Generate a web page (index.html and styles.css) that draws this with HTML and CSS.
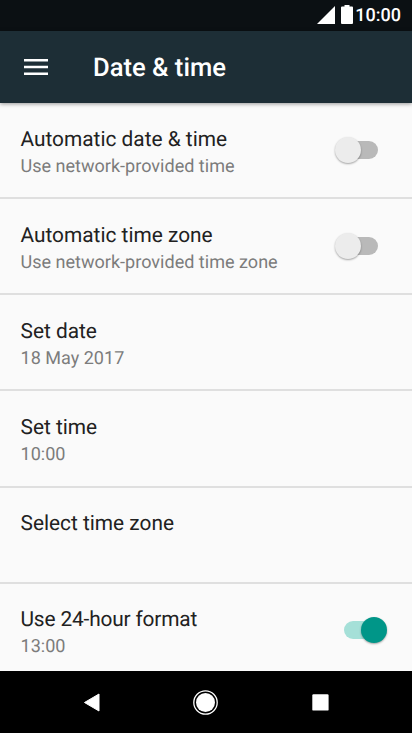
FILE: index.html
```html
<!DOCTYPE html>
<html lang="en">
<head>
<meta charset="utf-8">
<title>Date &amp; time</title>
<link rel="stylesheet" href="styles.css">
</head>
<body>
<div class="screen">
  <div class="status">
    <svg class="signal" width="18" height="18" viewBox="0 0 18 18"><path d="M18 0V18H0Z" fill="#fff"/></svg>
    <svg class="battery" width="12" height="19" viewBox="0 0 12 19"><path d="M3.500 0h5v1.500H11q1 0 1 1V18q0 1-1 1H1q-1 0-1-1V2.500q0-1 1-1h2.500z" fill="#fff"/></svg>
    <span class="clock">10:00</span>
  </div>
  <header class="bar">
    <svg class="menu" width="24" height="16" viewBox="0 0 24 16"><path d="M0 1.300h24M0 8h24M0 14.700h24" stroke="#fff" stroke-width="2.500"/></svg>
    <h1 class="title">Date &amp; time</h1>
  </header>
  <main class="list">
    <div class="row"><div class="text"><div class="name">Automatic date &amp; time</div><div class="sub">Use network-provided time</div></div><div class="switch"><span class="knob"></span></div></div>
    <div class="row"><div class="text"><div class="name">Automatic time zone</div><div class="sub">Use network-provided time zone</div></div><div class="switch"><span class="knob"></span></div></div>
    <div class="row"><div class="text"><div class="name">Set date</div><div class="sub">18 May 2017</div></div></div>
    <div class="row"><div class="text"><div class="name">Set time</div><div class="sub">10:00</div></div></div>
    <div class="row"><div class="text"><div class="name">Select time zone</div></div></div>
    <div class="row last"><div class="text"><div class="name tight">Use 24-hour format</div><div class="sub">13:00</div></div><div class="switch on"><span class="knob"></span></div></div>
  </main>
  <nav class="nav">
    <svg width="412" height="62" viewBox="0 0 412 62" fill="#fff"><path d="M84.500 31.500L99 23v17z" stroke="#fff" stroke-linejoin="round"/><circle cx="205.500" cy="31.500" r="9.500"/><circle cx="205.500" cy="31.500" r="11.700" fill="none" stroke="#fff" stroke-width="1.300"/><rect x="312.300" y="23.300" width="16.300" height="16.300" rx="1.200"/></svg>
  </nav>
</div>
</body>
</html>
```
FILE: styles.css
```css
* { box-sizing: border-box; }
body { margin: 0; font-family: Roboto, sans-serif; background: #fafafa; text-rendering: geometricPrecision; }
.screen { width: 412px; height: 733px; overflow: hidden; display: flex; flex-direction: column; }
.status { height: 31px; flex: none; background: #0b1013; color: #fff; display: flex; align-items: flex-start; justify-content: flex-end; padding: 6px 11px 0 0; }
.signal { margin-right: 6px; }
.battery { margin-top: -1px; }
.clock { font-size: 18px; line-height: 20px; font-weight: 500; margin-left: 2px; }
.bar { height: 72px; flex: none; background: #1d2e36; color: #fff; display: flex; align-items: center; padding-left: 24px; box-shadow: 0 1px 4px rgba(0,0,0,.4); position: relative; }
.title { margin: 2px 0 0 45px; font-size: 25.6px; line-height: 30px; font-weight: 500; }
.list { flex: 1; min-height: 0; overflow: hidden; }
.row { height: 96.15px; display: flex; justify-content: space-between; border-bottom: 2px solid #dfdfdf; padding: 22.8px 34px 0 20.5px; }
.last { padding-top: 22px; }
.name { font-size: 20.85px; line-height: 28px; color: #212121; white-space: nowrap; }
.tight { letter-spacing: -.15px; }
.sub { margin-top: 1px; font-size: 18.06px; line-height: 24px; color: #7c7c7c; white-space: nowrap; }
.switch { width: 42px; height: 18px; margin-top: 15.2px; border-radius: 9px; background: #b9b9b9; position: relative; }
.knob { position: absolute; width: 26px; height: 26px; left: -1px; top: -4px; border-radius: 50%; background: #ececec; box-shadow: 0 1px 2px rgba(0,0,0,.35); }
.on { background: #a5e0d8; margin-right: -8px; }
.on .knob { left: 17px; background: #009688; }
.nav { height: 62px; flex: none; background: #000; }
.nav svg { display: block; }
```
